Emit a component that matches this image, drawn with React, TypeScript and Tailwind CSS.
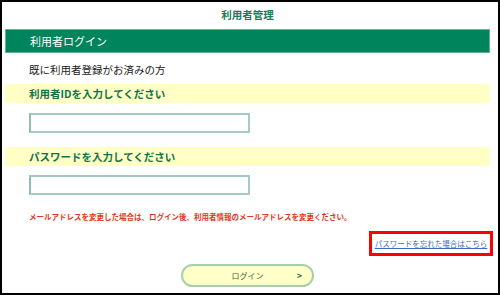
export default function App() {
  const jp = { fontFamily: '"Noto Sans CJK JP", "Noto Sans", sans-serif' };
  return (
    <div
      style={jp}
      className="box-border flex h-[295px] w-[500px] flex-col border-2 border-black bg-white pl-[3px] pr-[8px]"
    >
      {/* Page title */}
      <div className="flex h-[27px] items-center justify-center pb-[2px] text-[10.5px] font-bold text-[#1b7b5b]">
        利用者管理
      </div>

      {/* Section header */}
      <div className="flex h-[24px] items-center border border-[#62b394] bg-[#00845c] pl-[24px] text-[11px] text-white">
        利用者ログイン
      </div>

      <div className="flex h-[31px] items-center pl-[24px] pt-[3px] text-[10.5px] text-[#222]">
        既に利用者登録がお済みの方
      </div>

      <div className="flex h-[19px] items-center bg-[#ffffc6] pl-[24px] text-[10.5px] font-bold text-[#13704f]">
        利用者IDを入力してください
      </div>
      <div className="pl-[24px] pt-[10px]">
        <input
          type="text"
          className="box-border block h-[20px] w-[221px] border-2 border-[#a3cbc2] border-l-[#8fbcb2] bg-white outline-none"
        />
      </div>

      <div className="mt-[14px] flex h-[19px] items-center bg-[#ffffc6] pl-[24px] text-[10.5px] font-bold text-[#13704f]">
        パスワードを入力してください
      </div>
      <div className="pl-[24px] pt-[9px]">
        <input
          type="password"
          className="box-border block h-[20px] w-[221px] border-2 border-[#a3cbc2] border-l-[#8fbcb2] bg-white outline-none"
        />
      </div>

      <div className="flex h-[36px] items-center pl-[24px] pt-[8px] text-[7.5px] font-bold leading-none text-[#e2361c]">
        メールアドレスを変更した場合は、ログイン後、利用者情報のメールアドレスを変更ください。
      </div>

      <div className="flex justify-end">
        <div className="-mr-[3px] flex h-[25px] w-[124px] items-center justify-center border-[3px] border-[#ff0000]">
          <a href="#" className="text-[7.5px] leading-none text-[#4467c8] underline">
            パスワードを忘れた場合はこちら
          </a>
        </div>
      </div>

      <div className="flex justify-center pt-[8px]">
        <button
          type="button"
          className="relative box-border flex h-[23px] w-[133px] items-center justify-center rounded-full border-2 border-[#a8d0a8] bg-[#ffffc8] text-[8px] text-[#3a6b3a]"
        >
          ログイン
          <span className="absolute right-[10px] top-1/2 -translate-y-1/2 text-[9px] font-bold text-[#2f6f4f]">
            &gt;
          </span>
        </button>
      </div>
    </div>
  );
}
